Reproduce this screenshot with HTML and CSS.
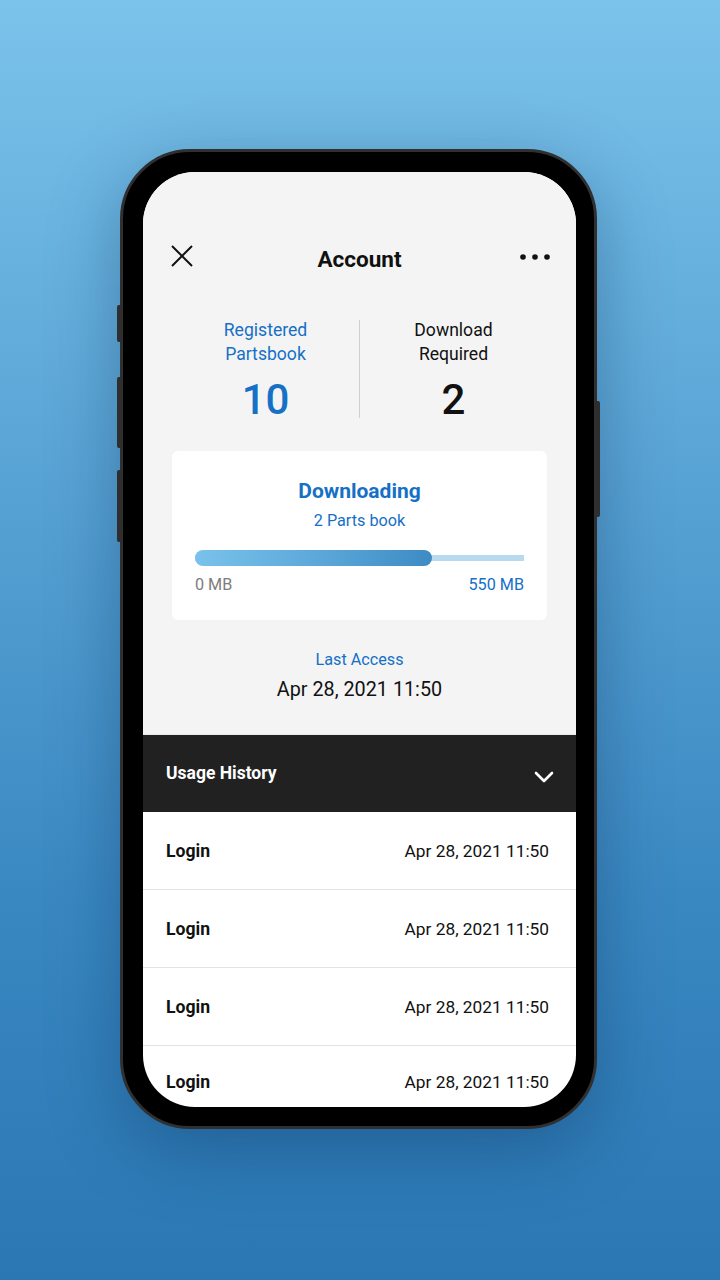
FILE: index.html
```html
<!DOCTYPE html>
<html lang="en">
<head>
<meta charset="utf-8">
<title>Account</title>
<link rel="stylesheet" href="styles.css">
</head>
<body>
<div class="stage">
  <div class="phone">
    <span class="btn btn-l1"></span>
    <span class="btn btn-l2"></span>
    <span class="btn btn-l3"></span>
    <span class="btn btn-r1"></span>
    <div class="screen">
      <section class="top">
        <header class="header">
          <svg class="icon-close" width="24" height="24" viewBox="0 0 24 24"><path d="M2 2 L22 22 M22 2 L2 22" stroke="#111" stroke-width="2" fill="none"/></svg>
          <h1 class="title">Account</h1>
          <svg class="icon-more" width="32" height="8" viewBox="0 0 32 8"><circle cx="4" cy="4" r="2.8" fill="#111"/><circle cx="16" cy="4" r="2.8" fill="#111"/><circle cx="28" cy="4" r="2.8" fill="#111"/></svg>
        </header>
        <div class="stats">
          <div class="stat stat-blue">
            <div class="stat-label">Registered<br>Partsbook</div>
            <div class="stat-num">10</div>
          </div>
          <div class="divider"></div>
          <div class="stat">
            <div class="stat-label">Download<br>Required</div>
            <div class="stat-num">2</div>
          </div>
        </div>
        <div class="card">
          <div class="card-title">Downloading</div>
          <div class="card-sub">2 Parts book</div>
          <div class="bar">
            <div class="bar-fill" style="width:72%"></div>
          </div>
          <div class="bar-labels">
            <span class="bar-min">0 MB</span>
            <span class="bar-max">550 MB</span>
          </div>
        </div>
        <div class="access">
          <div class="access-label">Last Access</div>
          <div class="access-date">Apr 28, 2021 11:50</div>
        </div>
      </section>
      <div class="history-head">
        <span>Usage History</span>
        <svg width="20" height="12" viewBox="0 0 20 12"><path d="M2 2 L10 10 L18 2" stroke="#fff" stroke-width="2.6" fill="none" stroke-linecap="round" stroke-linejoin="round"/></svg>
      </div>
      <ul class="history">
        <li class="row"><span class="row-type">Login</span><span class="row-date">Apr 28, 2021 11:50</span></li>
        <li class="row"><span class="row-type">Login</span><span class="row-date">Apr 28, 2021 11:50</span></li>
        <li class="row"><span class="row-type">Login</span><span class="row-date">Apr 28, 2021 11:50</span></li>
        <li class="row"><span class="row-type">Login</span><span class="row-date">Apr 28, 2021 11:50</span></li>
      </ul>
    </div>
  </div>
</div>
</body>
</html>
```

FILE: styles.css
```css
* { box-sizing: border-box; }
html, body { margin: 0; padding: 0; }
body {
  width: 720px;
  height: 1280px;
  overflow: hidden;
  font-family: Roboto, "Liberation Sans", sans-serif;
  background: linear-gradient(180deg, #7bc3eb 0%, #5aa5d6 35%, #3a88c2 70%, #2a77b4 100%);
}
.stage {
  padding: 149px 0 0 120px;
}
.phone {
  position: relative;
  width: 477px;
  height: 980px;
  background: #000;
  border: 3px solid #303030;
  border-radius: 70px;
  padding: 20px 19px 19px 20px;
  box-shadow: 0 20px 70px rgba(10, 40, 80, 0.35);
}
.btn {
  position: absolute;
  width: 5px;
  background: #2e2e2e;
  border-radius: 2px;
}
.btn-l1 { left: -6px; top: 153px; height: 37px; }
.btn-l2 { left: -6px; top: 225px; height: 71px; }
.btn-l3 { left: -6px; top: 318px; height: 72px; }
.btn-r1 { right: -6px; top: 249px; height: 116px; }
.screen {
  width: 433px;
  height: 935px;
  border-radius: 52px;
  overflow: hidden;
  background: #fff;
}
.top {
  background: #f4f4f4;
  padding: 62px 29px 31px;
  border-bottom: 1px solid #e8e8e8;
}
.header {
  height: 44px;
  display: flex;
  align-items: center;
  justify-content: space-between;
  margin: 0 -2px;
}
.icon-close { display: block; margin-top: 0; }
.icon-more { display: block; margin-right: -2px; margin-top: 2px; }
.title {
  margin: 0;
  font-size: 22.5px;
  font-weight: 700;
  color: #111;
  margin-top: 6px;
  margin-left: 6px;
}
.stats {
  display: flex;
  margin-top: 40px;
  height: 107px;
}
.stat {
  flex: 1;
  text-align: center;
  color: #111;
}
.stat-blue { color: #1570c6; }
.stat-label {
  font-size: 17.6px;
  line-height: 24px;
}
.stat-num {
  font-size: 42px;
  line-height: 50px;
  margin-top: 9px;
  font-weight: 500;
}
.divider {
  width: 1px;
  background: #cfcfcf;
  margin: 2px 0 7px;
}
.card {
  margin-top: 26px;
  background: #fff;
  border-radius: 6px;
  padding: 27px 23px 25px;
  text-align: center;
}
.card-title {
  font-size: 21px;
  line-height: 26px;
  font-weight: 700;
  color: #1570c6;
}
.card-sub {
  font-size: 16.2px;
  line-height: 22px;
  margin-top: 6px;
  color: #1570c6;
}
.bar {
  margin-top: 18px;
  height: 16px;
  display: flex;
  align-items: center;
  background: linear-gradient(#b9d9ef, #b9d9ef) center / 100% 6px no-repeat;
  border-radius: 3px;
}
.bar-fill {
  height: 16px;
  border-radius: 8px;
  background: linear-gradient(90deg, #79c2eb 0%, #5aa6d8 55%, #3d8bc4 100%);
}
.bar-labels {
  display: flex;
  justify-content: space-between;
  margin-top: 9px;
  font-size: 16.2px;
  line-height: 20px;
}
.bar-min { color: #7d7d7d; }
.bar-max { color: #1570c6; }
.access {
  text-align: center;
  margin-top: 29px;
}
.access-label {
  font-size: 16.2px;
  line-height: 22px;
  color: #1570c6;
}
.access-date {
  font-size: 19.8px;
  line-height: 26px;
  margin-top: 6px;
  color: #111;
}
.history-head {
  height: 77px;
  background: #212121;
  color: #fff;
  display: flex;
  align-items: center;
  justify-content: space-between;
  padding: 0 22px 0 23px;
  font-size: 17.5px;
  font-weight: 700;
}
.history-head span { margin-top: -2px; }
.history-head svg { display: block; margin-top: 7px; }
.history {
  list-style: none;
  margin: 0;
  padding: 0;
}
.row {
  height: 78px;
  display: flex;
  align-items: center;
  justify-content: space-between;
  padding: 0 27px 0 23px;
  border-bottom: 1px solid #e3e3e3;
  font-size: 17.3px;
  color: #111;
}
.row-type { font-weight: 700; font-size: 17.6px; }
.row:last-child { border-bottom: none; height: 72px; }
```
